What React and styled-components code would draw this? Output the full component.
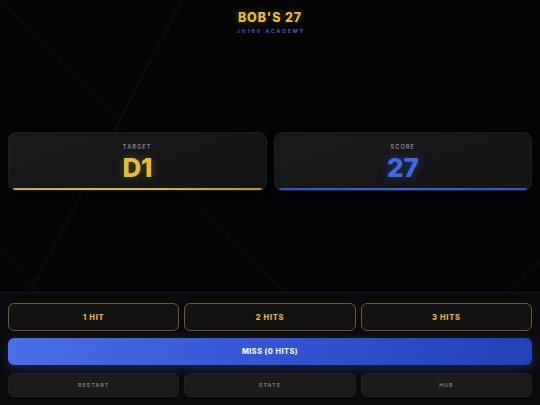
import React from "react";
import styled, { createGlobalStyle } from "styled-components";

const Global = createGlobalStyle`
  html, body { margin: 0; padding: 0; background: #050507; }
  body { font-family: "Inter", "Liberation Sans", sans-serif; }
  * { box-sizing: border-box; }
`;

const Page = styled.div`
  position: relative;
  width: 540px;
  height: 405px;
  display: flex;
  flex-direction: column;
  background: #050507;
  overflow: hidden;
`;

const Wires = styled.svg`
  position: absolute;
  inset: 0;
  width: 540px;
  height: 293px;
  pointer-events: none;
`;

const Header = styled.header`
  position: relative;
  display: flex;
  flex-direction: column;
  align-items: center;
  padding-top: 11px;
  gap: 3px;
`;

const Title = styled.h1`
  margin: 0;
  font-family: "Inter", sans-serif;
  font-weight: 800;
  font-size: 12.5px;
  line-height: 14px;
  letter-spacing: 0.9px;
  color: #e6bd3c;
  text-shadow: 0 0 8px rgba(230, 189, 60, 0.35);
`;

const Subtitle = styled.div`
  font-family: "Inter", sans-serif;
  font-weight: 700;
  font-size: 5px;
  line-height: 6px;
  letter-spacing: 2px;
  color: #3d5fd6;
  padding-left: 2px;
`;

const Main = styled.main`
  position: relative;
  flex: 1;
  display: flex;
  align-items: center;
  padding: 0 8px 0;
`;

const Cards = styled.div`
  width: 100%;
  display: grid;
  grid-template-columns: 1fr 1fr;
  gap: 7px;
  margin-bottom: 3px;
`;

const Card = styled.div`
  position: relative;
  height: 59px;
  border-radius: 8px;
  background: linear-gradient(160deg, #1a1a1d 0%, #141417 100%);
  border: 1px solid #1e1e22;
  box-shadow: 0 4px 10px rgba(0, 0, 0, 0.6);
  display: flex;
  flex-direction: column;
  align-items: center;
  padding-top: 11px;
  overflow: hidden;
`;

const CardLabel = styled.div`
  font-family: "Inter", sans-serif;
  font-weight: 600;
  font-size: 5.6px;
  line-height: 7px;
  letter-spacing: 1.1px;
  color: #8a8a8e;
`;

const CardValue = styled.div`
  margin-top: 4px;
  font-family: "Inter", sans-serif;
  font-weight: 800;
  font-size: 26px;
  line-height: 26px;
  letter-spacing: -0.3px;
  color: ${(p) => p.$color};
  text-shadow: 0 0 10px ${(p) => p.$glow};
`;

const Accent = styled.div`
  position: absolute;
  left: 4px;
  right: 4px;
  bottom: 0;
  height: 2px;
  border-radius: 2px;
  background: ${(p) => p.$bg};
`;

const Panel = styled.footer`
  position: relative;
  display: flex;
  flex-direction: column;
  padding: 10px 8px 8px;
  background: #0b0b0d;
  border-top: 1px solid #17171a;
`;

const Row = styled.div`
  display: grid;
  grid-template-columns: repeat(3, 1fr);
  gap: 5px;
`;

const HitButton = styled.button`
  height: 28px;
  border-radius: 6px;
  border: 1px solid #6e5b27;
  background: #121213;
  color: #e2b73a;
  font-family: "Inter", sans-serif;
  font-weight: 800;
  font-size: 7.5px;
  letter-spacing: 0.7px;
  padding: 0;
`;

const MissButton = styled.button`
  margin-top: 7px;
  height: 27px;
  border-radius: 6px;
  border: none;
  background: linear-gradient(100deg, #4a6fe6 0%, #3454d2 50%, #2440b6 100%);
  box-shadow: 0 3px 12px rgba(50, 90, 220, 0.35);
  color: #f4f6ff;
  font-family: "Inter", sans-serif;
  font-weight: 800;
  font-size: 7.3px;
  letter-spacing: 0.5px;
  padding: 0;
`;

const UtilRow = styled(Row)`
  margin-top: 8px;
`;

const UtilButton = styled.button`
  height: 24px;
  border-radius: 6px;
  border: 1px solid #222225;
  background: #1b1b1d;
  color: #78787c;
  font-family: "Inter", sans-serif;
  font-weight: 700;
  font-size: 5.3px;
  letter-spacing: 1px;
  padding: 0;
`;

export default function App() {
  return (
    <Page>
      <Global />
      <Wires viewBox="0 0 540 293">
        <g stroke="#131315" strokeWidth="1" fill="none">
          <line x1="2" y1="2" x2="285" y2="293" />
          <line x1="182" y1="0" x2="30" y2="293" />
          <line x1="0" y1="250" x2="40" y2="293" />
          <line x1="540" y1="262" x2="508" y2="293" />
        </g>
      </Wires>
      <Header>
        <Title>BOB'S 27</Title>
        <Subtitle>JH180 ACADEMY</Subtitle>
      </Header>
      <Main>
        <Cards>
          <Card>
            <CardLabel>TARGET</CardLabel>
            <CardValue $color="#e4bd34" $glow="rgba(228,189,52,0.3)">D1</CardValue>
            <Accent $bg="linear-gradient(90deg, #c9a860, #d8b454 50%, #b8923a)" />
          </Card>
          <Card>
            <CardLabel>SCORE</CardLabel>
            <CardValue $color="#3f6ae4" $glow="rgba(63,106,228,0.45)">27</CardValue>
            <Accent $bg="linear-gradient(90deg, #2f55c8, #3b62d8 50%, #2f55c8)" />
          </Card>
        </Cards>
      </Main>
      <Panel>
        <Row>
          <HitButton>1 HIT</HitButton>
          <HitButton>2 HITS</HitButton>
          <HitButton>3 HITS</HitButton>
        </Row>
        <MissButton>MISS (0 HITS)</MissButton>
        <UtilRow>
          <UtilButton>RESTART</UtilButton>
          <UtilButton>STATS</UtilButton>
          <UtilButton>HUB</UtilButton>
        </UtilRow>
      </Panel>
    </Page>
  );
}
